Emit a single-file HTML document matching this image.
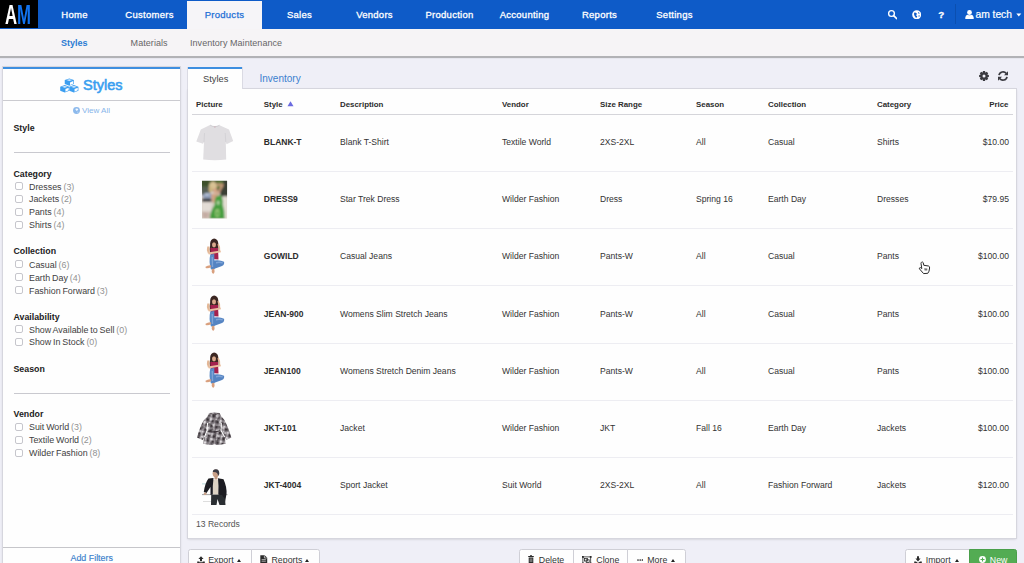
<!DOCTYPE html>
<html lang="en">
<head>
<meta charset="utf-8">
<title>Styles</title>
<style>
*{box-sizing:border-box;margin:0;padding:0}
html,body{width:1024px;height:563px;overflow:hidden}
body{background:#efeff7;font-family:"Liberation Sans",sans-serif;font-size:9px;color:#333;position:relative}
div,span,svg{position:absolute}
span{position:static}
/* top nav */
#nav{left:0;top:0;width:1024px;height:28.7px;background:#0e5bc8}
#logo{left:0;top:0;width:38px;height:28px;background:#000;overflow:hidden}
#logo b{position:absolute;top:1px;font-weight:bold;font-size:27px;line-height:28px;transform-origin:0 50%;transform:scaleX(.62)}
.ni{top:.2px;height:28px;width:75px;text-align:center;line-height:30px;font-size:9.5px;letter-spacing:.27px;color:#fff;-webkit-text-stroke:.3px #fff}
.ni.act{top:1.4px;line-height:27.6px;height:27.3px;background:#f6f5f8;color:#1d6fd6;-webkit-text-stroke:.25px #1d6fd6}
#sub{left:0;top:28.7px;width:1024px;height:29.4px;background:#f6f4f6}
.si{top:.6px;height:28px;line-height:29px;font-size:9px;color:#666;white-space:nowrap}
/* panels */
.panel{background:#fefefe;box-shadow:0 0 0 1px #d6d6de,0 1px 2.5px rgba(0,0,0,.2)}
#left{left:3px;top:67px;width:177px;height:500px;border-top:2px solid #3d8ee0}
#right{left:188px;top:88.9px;width:827.6px;height:449.1px}
/* sidebar */
.fh,.fi{left:13.5px;height:12px;line-height:12px;margin-top:-5.6px;font-size:8.9px;white-space:nowrap;color:#222}
.fh{font-weight:bold;font-size:8.8px}
.fi{left:29px;color:#414141;word-spacing:-.6px}
.fi span{color:#929292}
.cb{margin-top:0;left:14.9px;width:8.4px;height:8.2px;border:1px solid #c6c6cc;border-radius:2px;background:#fff}
.hr{left:13.5px;width:156px;height:1px;background:#c9c9cf}
/* table */
.th{top:98.5px;height:12px;line-height:12px;font-weight:bold;font-size:7.9px;color:#2c2c2c;white-space:nowrap}
.td{height:12px;line-height:12px;margin-top:-6px;font-size:8.58px;color:#333;white-space:nowrap}
.td.b{font-weight:bold;font-size:8.5px;color:#2c2c2c}
.hl{left:192px;width:820.5px;height:1px;background:#ededf2}
/* buttons */
.bt{top:553.8px;height:12px;line-height:12px;font-size:8.8px;color:#333;white-space:nowrap}
.ct{top:558.5px;width:0;height:0;border-left:2.5px solid transparent;border-right:2.5px solid transparent;border-bottom:3px solid #222}
.btn{top:548.5px;height:20px;background:#fefefe;border:1px solid #cfcfd6}
</style>
</head>
<body>
<div id="nav">
  <div id="logo"><b style="left:5px;color:#fff">A</b><b style="left:17px;color:#1173f0">M</b></div>
  <div class="ni" style="left:37px">Home</div>
  <div class="ni" style="left:112px">Customers</div>
  <div class="ni act" style="left:187px">Products</div>
  <div class="ni" style="left:262px">Sales</div>
  <div class="ni" style="left:337px">Vendors</div>
  <div class="ni" style="left:412px">Production</div>
  <div class="ni" style="left:487px">Accounting</div>
  <div class="ni" style="left:562px">Reports</div>
  <div class="ni" style="left:637px">Settings</div>
  <div class="ni" style="left:975.6px;top:-.4px;width:40px;text-align:left;font-size:10.3px;letter-spacing:-.05px;-webkit-text-stroke:.2px #fff">am tech</div>
  <div style="left:955px;top:4px;width:1px;height:20px;background:#0b4fb0"></div>
</div>
<div id="sub">
  <div class="si" style="left:61px;color:#2b7bd3;font-weight:bold">Styles</div>
  <div class="si" style="left:130.6px;letter-spacing:.06px">Materials</div>
  <div class="si" style="left:190px;letter-spacing:.05px">Inventory Maintenance</div>
</div>
<div style="left:0;top:56.3px;width:1024px;height:1.8px;background:#b2b2b6"></div>
<div style="left:0;top:58.1px;width:1024px;height:1px;background:#e6e6ee"></div>
<div id="left" class="panel"></div>
<div id="right" class="panel"></div>
<!-- sidebar title -->
<div style="left:83px;top:75px;height:20px;line-height:20px;font-size:14.5px;color:#3a9ff0;-webkit-text-stroke:.6px #3a9ff0">Styles</div>
<div style="left:3px;top:100px;width:177px;height:1px;background:#cbcbd0"></div>
<div style="left:82px;top:105px;height:12px;line-height:12px;font-size:8.05px;color:#86b5ea">View All</div>
<div style="left:3px;top:546.8px;width:177px;height:1px;background:#c6c6ca"></div>
<div style="left:70.5px;top:551.5px;height:12px;line-height:12px;font-size:8.9px;color:#3a80cc;-webkit-text-stroke:.15px #3a80cc">Add Filters</div>
<!-- tabs -->
<div style="left:188px;top:67px;width:54.3px;height:22px;background:#fefefe;border-top:2px solid #3d8ee0;box-shadow:-1px 0 0 #dadae3,1px 0 0 #dadae3"></div>
<div style="left:203px;top:72.8px;height:12px;line-height:12px;font-size:9.3px;color:#444">Styles</div>
<div style="left:259.5px;top:72.5px;height:12px;line-height:12px;font-size:10px;color:#3b7fcf">Inventory</div>
<div class="td" style="left:196px;top:524px;color:#555">13 Records</div>
<div class="fh" style="top:128px">Style</div>
<div class="hr" style="top:152px"></div>
<div class="fh" style="top:173.4px">Category</div>
<div class="cb" style="top:182.2px"></div><div class="fi" style="top:186.2px">Dresses <span>(3)</span></div>
<div class="cb" style="top:195px"></div><div class="fi" style="top:199px">Jackets <span>(2)</span></div>
<div class="cb" style="top:207.8px"></div><div class="fi" style="top:211.8px">Pants <span>(4)</span></div>
<div class="cb" style="top:220.6px"></div><div class="fi" style="top:224.6px">Shirts <span>(4)</span></div>
<div class="fh" style="top:251px">Collection</div>
<div class="cb" style="top:260.2px"></div><div class="fi" style="top:264.2px">Casual <span>(6)</span></div>
<div class="cb" style="top:273.2px"></div><div class="fi" style="top:277.2px">Earth Day <span>(4)</span></div>
<div class="cb" style="top:286.2px"></div><div class="fi" style="top:290.2px">Fashion Forward <span>(3)</span></div>
<div class="fh" style="top:316.2px">Availability</div>
<div class="cb" style="top:325.2px"></div><div class="fi" style="top:329.2px">Show Available to Sell <span>(0)</span></div>
<div class="cb" style="top:338px"></div><div class="fi" style="top:342px">Show In Stock <span>(0)</span></div>
<div class="fh" style="top:368.5px">Season</div>
<div class="hr" style="top:392.5px"></div>
<div class="fh" style="top:413.7px">Vendor</div>
<div class="cb" style="top:422.8px"></div><div class="fi" style="top:426.8px">Suit World <span>(3)</span></div>
<div class="cb" style="top:435.6px"></div><div class="fi" style="top:439.6px">Textile World <span>(2)</span></div>
<div class="cb" style="top:448.5px"></div><div class="fi" style="top:452.5px">Wilder Fashion <span>(8)</span></div><div class="th" style="left:196px">Picture</div>
<div class="th" style="left:263.8px">Style</div>
<div class="th" style="left:340px">Description</div>
<div class="th" style="left:502px">Vendor</div>
<div class="th" style="left:600px">Size Range</div>
<div class="th" style="left:696px">Season</div>
<div class="th" style="left:768px">Collection</div>
<div class="th" style="left:877px">Category</div>
<div class="th" style="left:958px;width:50.5px;text-align:right">Price</div>
<div class="hl" style="top:113.5px;height:1.5px;background:#d5d5da"></div>
<div class="td b" style="left:263.8px;top:142.0px">BLANK-T</div>
<div class="td" style="left:340px;top:142.0px">Blank T-Shirt</div>
<div class="td" style="left:502px;top:142.0px">Textile World</div>
<div class="td" style="left:600px;top:142.0px">2XS-2XL</div>
<div class="td" style="left:696px;top:142.0px">All</div>
<div class="td" style="left:768px;top:142.0px">Casual</div>
<div class="td" style="left:877px;top:142.0px">Shirts</div>
<div class="td" style="left:948px;width:61px;text-align:right;top:142.0px">$10.00</div>
<div class="hl" style="top:171.0px"></div>
<div class="td b" style="left:263.8px;top:199.2px">DRESS9</div>
<div class="td" style="left:340px;top:199.2px">Star Trek Dress</div>
<div class="td" style="left:502px;top:199.2px">Wilder Fashion</div>
<div class="td" style="left:600px;top:199.2px">Dress</div>
<div class="td" style="left:696px;top:199.2px">Spring 16</div>
<div class="td" style="left:768px;top:199.2px">Earth Day</div>
<div class="td" style="left:877px;top:199.2px">Dresses</div>
<div class="td" style="left:948px;width:61px;text-align:right;top:199.2px">$79.95</div>
<div class="hl" style="top:228.2px"></div>
<div class="td b" style="left:263.8px;top:256.4px">GOWILD</div>
<div class="td" style="left:340px;top:256.4px">Casual Jeans</div>
<div class="td" style="left:502px;top:256.4px">Wilder Fashion</div>
<div class="td" style="left:600px;top:256.4px">Pants-W</div>
<div class="td" style="left:696px;top:256.4px">All</div>
<div class="td" style="left:768px;top:256.4px">Casual</div>
<div class="td" style="left:877px;top:256.4px">Pants</div>
<div class="td" style="left:948px;width:61px;text-align:right;top:256.4px">$100.00</div>
<div class="hl" style="top:285.4px"></div>
<div class="td b" style="left:263.8px;top:313.6px">JEAN-900</div>
<div class="td" style="left:340px;top:313.6px">Womens Slim Stretch Jeans</div>
<div class="td" style="left:502px;top:313.6px">Wilder Fashion</div>
<div class="td" style="left:600px;top:313.6px">Pants-W</div>
<div class="td" style="left:696px;top:313.6px">All</div>
<div class="td" style="left:768px;top:313.6px">Casual</div>
<div class="td" style="left:877px;top:313.6px">Pants</div>
<div class="td" style="left:948px;width:61px;text-align:right;top:313.6px">$100.00</div>
<div class="hl" style="top:342.6px"></div>
<div class="td b" style="left:263.8px;top:370.8px">JEAN100</div>
<div class="td" style="left:340px;top:370.8px">Womens Stretch Denim Jeans</div>
<div class="td" style="left:502px;top:370.8px">Wilder Fashion</div>
<div class="td" style="left:600px;top:370.8px">Pants-W</div>
<div class="td" style="left:696px;top:370.8px">All</div>
<div class="td" style="left:768px;top:370.8px">Casual</div>
<div class="td" style="left:877px;top:370.8px">Pants</div>
<div class="td" style="left:948px;width:61px;text-align:right;top:370.8px">$100.00</div>
<div class="hl" style="top:399.8px"></div>
<div class="td b" style="left:263.8px;top:428.0px">JKT-101</div>
<div class="td" style="left:340px;top:428.0px">Jacket</div>
<div class="td" style="left:502px;top:428.0px">Wilder Fashion</div>
<div class="td" style="left:600px;top:428.0px">JKT</div>
<div class="td" style="left:696px;top:428.0px">Fall 16</div>
<div class="td" style="left:768px;top:428.0px">Earth Day</div>
<div class="td" style="left:877px;top:428.0px">Jackets</div>
<div class="td" style="left:948px;width:61px;text-align:right;top:428.0px">$100.00</div>
<div class="hl" style="top:457.0px"></div>
<div class="td b" style="left:263.8px;top:485.2px">JKT-4004</div>
<div class="td" style="left:340px;top:485.2px">Sport Jacket</div>
<div class="td" style="left:502px;top:485.2px">Suit World</div>
<div class="td" style="left:600px;top:485.2px">2XS-2XL</div>
<div class="td" style="left:696px;top:485.2px">All</div>
<div class="td" style="left:768px;top:485.2px">Fashion Forward</div>
<div class="td" style="left:877px;top:485.2px">Jackets</div>
<div class="td" style="left:948px;width:61px;text-align:right;top:485.2px">$120.00</div>
<div class="hl" style="top:514.2px"></div><!-- bottom buttons -->
<div class="btn" style="left:188px;width:64px;border-radius:2.5px 0 0 0"></div>
<div class="btn" style="left:251px;width:68.5px;border-radius:0 2.5px 0 0"></div>
<div class="btn" style="left:519px;width:55px;border-radius:2.5px 0 0 0"></div>
<div class="btn" style="left:573px;width:55px"></div>
<div class="btn" style="left:627px;width:58.5px;border-radius:0 2.5px 0 0"></div>
<div class="btn" style="left:905px;width:65px;border-radius:2.5px 0 0 0"></div>
<div class="btn" style="left:969px;width:48px;border-radius:0 2.5px 0 0;background:#53ac53;border-color:#4a9f4a"></div>
<div class="bt" style="left:208.2px">Export</div>
<div class="bt" style="left:271.5px">Reports</div>
<div class="bt" style="left:538.8px">Delete</div>
<div class="bt" style="left:596.3px">Clone</div>
<div class="bt" style="left:647.3px">More</div>
<div class="bt" style="left:925.7px">Import</div>
<div class="bt" style="left:989.8px;color:#fff">New</div>
<div class="ct" style="left:237px"></div>
<div class="ct" style="left:305px"></div>
<div class="ct" style="left:670.5px"></div>
<div class="ct" style="left:955.2px"></div>
<svg width="0" height="0" style="left:0;top:0"><defs>
<filter id="b0" x="-20%" y="-20%" width="140%" height="140%"><feGaussianBlur stdDeviation="0.35"/></filter>
<filter id="b15" x="-20%" y="-20%" width="140%" height="140%"><feGaussianBlur stdDeviation="0.7"/></filter>
<filter id="b1" x="-20%" y="-20%" width="140%" height="140%"><feGaussianBlur stdDeviation="0.55"/></filter>
<filter id="b2" x="-20%" y="-20%" width="140%" height="140%"><feGaussianBlur stdDeviation="0.85"/></filter>
<filter id="b3" x="-20%" y="-20%" width="140%" height="140%"><feGaussianBlur stdDeviation="1.2"/></filter>
<g id="woman" filter="url(#b15)">
 <ellipse cx="24.2" cy="12" rx="4.1" ry="5.6" fill="#3b2622"/>
 <path d="M20.5 12 q-1.5 5 -0.5 9 l2.5 0 z M27.5 11 q1.8 4 0.8 9 l-2 -1 z" fill="#3b2622"/>
 <ellipse cx="24" cy="12.8" rx="2" ry="2.6" fill="#d9a98c"/>
 <path d="M20.3 16 L28 16 L28.5 27.5 L21 27 z" fill="#a4214d"/>
 <path d="M17.3 14.5 q-1.2 3.5 0.6 7 l2 -.6 q-1 -3.5 -.3 -6.300z" fill="#e3b796"/>
 <path d="M18 20.5 L30.5 18.4 L31 20.2 L18.8 22.600z" fill="#e8bf9f"/>
 <path d="M28.6 11.5 q2.3 3.5 1.6 7.8 l-1.5 0 q.3 -3.8 -1.3 -6.800z" fill="#e3b796"/>
 <path d="M20.3 22.5 L24.3 22 L24.5 37 L21 37.5 Q18.5 30 20.3 22.500z" fill="#5a8ac6"/>
 <path d="M24 28.5 Q30 27.5 34 29.8 Q34.8 32.5 32 34 L22.5 37.5 L21.5 35 z" fill="#5584c2"/>
 <path d="M21.6 25 L23 25 L23.2 35 L22 35z M26 30 Q30 29 33 30.5 L32.500 31.5 Q29 30.5 26 31.500z" fill="#7fa4d6"/>
 <path d="M15.5 34.8 q2.5 -2 5.5 -1.6 l.2 1.7 q-3 1.8 -5.5 1z" fill="#d9a07e"/>
 <path d="M22 37 l2.3 -.3 q.8 3 -.6 5 q-1.8 -.2 -2 -2z" fill="#d9a07e"/>
</g>
</defs></svg>
<!-- T-shirt -->
<svg style="left:190px;top:120px" width="60" height="50" viewBox="0 0 60 50">
 <g filter="url(#b1)">
 <path d="M20 5 Q24.5 6.8 29.5 5.2 L39 9.5 L43.2 21 L36.5 24.2 L35.8 22 L36.2 39.5 Q25 41 13.2 39.5 L14 22 L13 23.8 L6.3 21.5 L10.8 9.5 z" fill="#e0dee1"/>
 <path d="M20 5 Q24.5 8.5 29.5 5.2" fill="none" stroke="#c9c7cb" stroke-width=".7"/>
 <path d="M14 22 L14.5 13 M35.8 22 L35.2 13" stroke="#cfcdd1" stroke-width=".7" fill="none"/>
 <rect x="24.4" y="6.4" width="1" height="1.1" fill="#c9a0aa"/>
 </g>
</svg>
<!-- Dress photo -->
<svg style="left:190px;top:175px" width="60" height="50" viewBox="0 0 60 50">
 <clipPath id="dc"><rect x="12" y="5.8" width="25.1" height="37.7"/></clipPath>
 <g clip-path="url(#dc)"><g filter="url(#b2)">
  <rect x="10" y="4" width="30" height="42" fill="#d9d0c7"/>
  <rect x="10" y="3" width="30" height="13" fill="#4a5d31"/>
  <rect x="11" y="3" width="8" height="8" fill="#3d4f2a"/>
  <rect x="30" y="5" width="9" height="16.5" fill="#3b4036"/>
  <rect x="27" y="6" width="6" height="7" fill="#5e7a3a"/>
  <rect x="11" y="12" width="9" height="8" fill="#565f52"/>
  <ellipse cx="17.5" cy="20.8" rx="5" ry="3" fill="#8e9db9"/>
  <ellipse cx="17" cy="19.6" rx="2.5" ry="1" fill="#c5cedd"/>
  <rect x="12" y="23.6" width="9.5" height="3.2" fill="#2d2e33"/>
  <rect x="12" y="27.4" width="9" height="9.6" fill="#e3dcd5"/>
  <rect x="12" y="36.5" width="8" height="7" fill="#cdb9b0"/>
  <path d="M12.5 38 L18 40 M13 41 L17 42.5" stroke="#a98478" stroke-width=".7"/>
  <rect x="33" y="21.5" width="5" height="23" fill="#e4ded4"/>
  <ellipse cx="23" cy="11" rx="4" ry="4.4" fill="#d9c394"/>
  <ellipse cx="20.5" cy="14.5" rx="1.8" ry="3" fill="#cdb47f"/>
  <ellipse cx="25.2" cy="15.6" rx="2" ry="2.8" fill="#d6a585"/>
  <path d="M27.6 19 L32.6 9.8 L27 9.6" fill="none" stroke="#c8997a" stroke-width="2.3" stroke-linejoin="round" stroke-linecap="round"/>
  <path d="M21 19.5 Q24 18 27.5 20 L27 27 L22.5 28z" fill="#d2a283"/>
  <path d="M26 21.5 L30.5 20 Q33.5 24 32.6 29 Q35 36 34.6 44 L19.8 44 Q20.2 36 24.6 30 Q24.2 25 26 21.5z" fill="#449d3c"/>
  <ellipse cx="27.3" cy="38" rx="2.4" ry="4.2" fill="#93c273"/>
  <ellipse cx="27.4" cy="38.4" rx="1" ry="2" fill="#4aa542"/>
  <ellipse cx="28.2" cy="27.8" rx="1.4" ry="2.2" fill="#b3d4a3"/>
 </g></g>
</svg>
<!-- women in jeans x3 -->
<svg style="left:190px;top:232px" width="60" height="50" viewBox="0 0 60 50"><use href="#woman"/></svg>
<svg style="left:190px;top:289.200px" width="60" height="50" viewBox="0 0 60 50"><use href="#woman"/></svg>
<svg style="left:190px;top:346.400px" width="60" height="50" viewBox="0 0 60 50"><use href="#woman"/></svg>
<!-- plaid jacket -->
<svg style="left:190px;top:404px" width="60" height="50" viewBox="0 0 60 50">
 <defs>
  <pattern id="pl" width="5" height="5" patternUnits="userSpaceOnUse" patternTransform="rotate(14)">
   <rect width="5" height="5" fill="#857f84"/>
   <rect width="2.4" height="2.4" fill="#3f383d"/>
   <rect x="2.8" y="2.8" width="1.9" height="1.9" fill="#dedadd"/>
   <rect x="2.8" y="0" width="1.4" height="1.6" fill="#b9b4b8"/>
  </pattern>
  <pattern id="pl2" width="7.3" height="6.1" patternUnits="userSpaceOnUse" patternTransform="rotate(-24)">
   <rect x="1" y="1" width="3" height="2.2" fill="#2f292e" opacity=".55"/>
   <rect x="4.6" y="3.6" width="2.2" height="2" fill="#f4f1f3" opacity=".6"/>
  </pattern>
  <clipPath id="jc"><path d="M19 9 Q24.5 7.8 29.5 9 L31.5 12.5 L34.8 16.5 Q39 25 41.4 33.6 L36.4 36 L35 33.5 L35.6 39.8 Q25 42.2 13.2 39.8 L14 33.5 L12.6 36 L7 33.6 Q9.8 23 13.6 16.5 L17.4 12.5z"/></clipPath>
 </defs>
 <g filter="url(#b1)"><g clip-path="url(#jc)" filter="url(#b0)"><rect width="60" height="50" fill="url(#pl)"/><rect width="60" height="50" fill="url(#pl2)"/>
  <path d="M25 9 L25.6 40" stroke="#554e54" stroke-width=".6"/>
  <path d="M17.6 27 Q24 29 30.8 26.5" stroke="#3d363b" stroke-width="1.2" fill="none"/>
  <path d="M14.6 33 Q16.4 28 17.2 26.5 Q17 22 17.6 19 M34.6 33 Q32 28 31 26.5 Q31.6 22 31.2 19" stroke="#fff" stroke-width="1.1" fill="none"/>
  <path d="M20.5 9.5 Q24.5 12 28.5 9.5" stroke="#4a4348" stroke-width="1" fill="none"/>
 </g></g>
</svg>
<!-- man in black jacket -->
<svg style="left:190px;top:461px" width="60" height="50" viewBox="0 0 60 50">
 <g filter="url(#b1)">
  <rect x="12" y="33.2" width="25.5" height=".9" fill="#9a9a9a"/>
  <rect x="13" y="40" width="8" height=".6" fill="#c8c8c8"/>
  <rect x="12" y="22.5" width="4" height=".8" fill="#a9d3d8"/>
  <ellipse cx="25.8" cy="12.3" rx="3.2" ry="3.9" fill="#c9a088"/>
  <path d="M22.8 11 Q23 8 26 8.3 Q29.5 8.3 29.3 13 L28 15 Q28 10.5 22.8 11z" fill="#3b3a44"/>
  <rect x="24.5" y="15" width="3" height="3.5" fill="#c39a82"/>
  <path d="M23 19 L28.5 19 L28.5 33.5 L22.5 33.500z" fill="#ddd3c4"/>
  <path d="M18.5 17.5 L23.5 17 Q22.5 25 22.8 33.5 L20.5 34 L20.5 26 L16.5 32 L13.8 31 Q15 22 18.5 17.500z" fill="#1b1b20"/>
  <path d="M28 17.2 L33.5 18.2 Q37 26 36.5 33 L35 41 L32 35 L28.3 33.5 Q28.8 25 28 17.200z" fill="#1b1b20"/>
  <ellipse cx="15.2" cy="32.8" rx="1.5" ry="1.3" fill="#c9a088"/>
  <path d="M21.2 33.8 L32 33.8 L35 38 L35.5 44 L29.5 44 L27.5 38 L26.5 44 L21 44z" fill="#2a2d30"/>
 </g>
</svg>
<svg style="left:977.8px;top:70px" width="12" height="12" viewBox="0 0 12 12"><path d="M4.77 2.3 L4.91 1.12 L7.09 1.12 L7.23 2.3 L7.75 2.51 L8.68 1.78 L10.22 3.32 L9.49 4.25 L9.7 4.77 L10.88 4.91 L10.88 7.09 L9.7 7.23 L9.49 7.75 L10.22 8.68 L8.68 10.22 L7.75 9.49 L7.23 9.7 L7.09 10.88 L4.91 10.88 L4.77 9.7 L4.25 9.49 L3.32 10.22 L1.78 8.68 L2.51 7.75 L2.3 7.23 L1.12 7.09 L1.12 4.91 L2.3 4.77 L2.51 4.25 L1.78 3.32 L3.32 1.78 L4.25 2.51z M4.5 6 a1.5 1.5 0 1 0 3 0 a1.5 1.5 0 1 0 -3 0z" fill="#3a3a40" fill-rule="evenodd"/></svg>
<svg style="left:997.4px;top:70px" width="12" height="12" viewBox="0 0 12 12"><g fill="none" stroke="#3a3a40" stroke-width="1.7"><path d="M2 5.2 A4.1 4.1 0 0 1 9.3 3.5"/><path d="M10 6.8 A4.1 4.1 0 0 1 2.7 8.5"/></g><path d="M11 1.2 L11 5.2 L7 5.2z M1 10.8 L1 6.8 L5 6.8z" fill="#3a3a40"/></svg>
<svg style="left:286.5px;top:100.5px" width="7" height="6" viewBox="0 0 7 6"><path d="M3.5 .3 L6.5 5.2 L.5 5.2z" fill="#6b6be0"/></svg>
<svg style="left:59.7px;top:77.6px" width="19" height="15" viewBox="0 0 19 15"><path d="M9.3 0.4 L13.85 2.1 L13.85 6 L9.3 7.7 L4.75 6 L4.75 2.1z" fill="#3b9ef0"/><path d="M10 4.4 L13.2 2.95 L13.2 5.65 L10 6.95z" fill="#fdfdfe"/><path d="M9.3 1.2 L12.25 2.1 L9.3 3 L6.35 2.1z" fill="#d8ebfc"/><path d="M4.75 7.1 L9.3 8.8 L9.3 12.7 L4.75 14.4 L0.2 12.7 L0.2 8.8z" fill="#3b9ef0"/><path d="M5.45 11.1 L8.65 9.65 L8.65 12.35 L5.45 13.65z" fill="#fdfdfe"/><path d="M4.75 7.9 L7.7 8.8 L4.75 9.7 L1.8 8.8z" fill="#d8ebfc"/><path d="M13.85 7.1 L18.4 8.8 L18.4 12.7 L13.85 14.4 L9.3 12.7 L9.3 8.8z" fill="#3b9ef0"/><path d="M14.55 11.1 L17.75 9.65 L17.75 12.35 L14.55 13.65z" fill="#fdfdfe"/><path d="M13.85 7.9 L16.8 8.8 L13.85 9.7 L10.9 8.8z" fill="#d8ebfc"/></svg>
<svg style="left:72.7px;top:106.9px" width="7" height="7" viewBox="0 0 10 10"><circle cx="5" cy="5" r="4.9" fill="#8cb9ec"/><path d="M3.6 2.6 Q5.5 1.6 7.6 2.8 Q7.2 4.4 5.8 5.2 Q5 6.4 4.6 4.8 Q3.2 4.2 3.6 2.6z" fill="#f4f9fe"/><path d="M6.4 6.8 Q7.6 6.4 8 7.2 Q7.2 8.4 6.2 8.2z" fill="#d5e6f8"/></svg>
<svg style="left:886.7px;top:9.2px" width="10.8" height="10.8" viewBox="0 0 12 12"><circle cx="5" cy="5" r="3.2" fill="none" stroke="#fff" stroke-width="1.5"/><path d="M7.4 7.4 L10.6 10.6" stroke="#fff" stroke-width="1.8" stroke-linecap="round"/></svg>
<svg style="left:911.8px;top:9.6px" width="9.4" height="9.4" viewBox="0 0 10 10"><circle cx="5" cy="5" r="4.8" fill="#fff"/><path d="M2.2 3 Q3.6 2.4 4.4 3.2 Q5.4 3.4 5.2 4.4 Q4.2 4.8 4.4 5.8 Q5.6 6 5.6 7 Q5 8.4 4.2 8.6 Q3.8 7.4 3 6.6 Q2 5.6 2.2 3z M6.4 2 Q7.6 2.4 8.2 3.6 L7.2 4 Q6.4 3.2 6.4 2z M7 5.6 Q8 5.4 8.4 6 Q8 7 7.2 7.4z" fill="#0e5bc8"/></svg>
<div style="left:937.2px;top:8.4px;width:8px;height:14px;line-height:14px;text-align:center;font-size:9.8px;-webkit-text-stroke:.3px #fff;font-weight:bold;color:#fff">?</div>
<svg style="left:964.5px;top:9.5px" width="9" height="9.5" viewBox="0 0 9 9.5"><circle cx="4.5" cy="2.5" r="2.4" fill="#fff"/><path d="M.3 9.3 L.3 7.4 Q.5 5 2.8 4.7 Q4.5 5.8 6.2 4.7 Q8.5 5 8.7 7.4 L8.7 9.3z" fill="#fff"/></svg>
<svg style="left:1016px;top:12.9px" width="6" height="4" viewBox="0 0 6 4"><path d="M.3 .4 L5.3 .4 L2.8 3.4z" fill="#fff"/></svg>
<svg style="left:196.6px;top:555.5px" width="8" height="8" viewBox="0 0 8 8"><path d="M4 .2 L6.6 3 L5 3 L5 5.2 L3 5.2 L3 3 L1.4 3z M.2 5.6 L2.4 5.6 L2.4 6.2 L5.6 6.2 L5.6 5.6 L7.8 5.6 L7.8 8 L.2 8z" fill="#2b2b2b"/></svg>
<svg style="left:260.2px;top:555.2px" width="7.5" height="8" viewBox="0 0 7.5 8"><path d="M.3 .2 L4.6 .2 L7.2 2.8 L7.2 8 L.3 8z" fill="#2b2b2b"/><path d="M4.4 .6 L4.4 3 L6.8 3" fill="none" stroke="#fff" stroke-width=".6"/><path d="M1.6 4.6 H5.8 M1.6 6.2 H5.8" stroke="#fff" stroke-width=".6"/></svg>
<svg style="left:528.4px;top:555.4px" width="6" height="8" viewBox="0 0 6 8"><path d="M2 .2 H4 V1 H5.8 V2 H.2 V1 H2z M.7 2.5 H5.3 V8 H.7z" fill="#2b2b2b"/><path d="M2.2 3.4 V7 M3.8 3.4 V7" stroke="#fff" stroke-width=".5"/></svg>
<svg style="left:582.2px;top:555.6px" width="9.6" height="8" viewBox="0 0 9.6 8"><g fill="none" stroke="#2b2b2b" stroke-width=".8"><rect x=".9" y=".9" width="7.8" height="6.6"/><rect x="2.6" y="2.4" width="3" height="2.6"/><rect x="4.2" y="3.8" width="3" height="2.6"/></g><g fill="#2b2b2b"><rect x="0" y="0" width="1.8" height="1.8"/><rect x="7.8" y="0" width="1.8" height="1.8"/><rect x="0" y="6.6" width="1.8" height="1.4"/><rect x="7.8" y="6.6" width="1.8" height="1.4"/></g></svg>
<svg style="left:636.6px;top:558.8px" width="6.4" height="2" viewBox="0 0 6.4 2"><circle cx="1" cy="1" r=".85" fill="#2b2b2b"/><circle cx="3.2" cy="1" r=".85" fill="#2b2b2b"/><circle cx="5.4" cy="1" r=".85" fill="#2b2b2b"/></svg>
<svg style="left:914.2px;top:555.5px" width="8" height="8" viewBox="0 0 8 8"><path d="M3 .2 L5 .2 L5 2.6 L6.6 2.6 L4 5.4 L1.4 2.6 L3 2.6z M.2 5.6 L2 5.6 L4 7 L6 5.6 L7.8 5.6 L7.8 8 L.2 8z" fill="#2b2b2b"/></svg>
<svg style="left:978.6px;top:556.2px" width="7" height="7" viewBox="0 0 7 7"><circle cx="3.5" cy="3.5" r="3.4" fill="#fff"/><path d="M3.5 1.5 V5.5 M1.5 3.5 H5.5" stroke="#53ac53" stroke-width="1.1"/></svg>
<svg style="left:918px;top:260.6px" width="13" height="14" viewBox="0 0 13 14"><path d="M3.6 1.2 Q4.6 .6 5.2 1.6 L5.8 4.3 L10.5 5 Q11.8 5.4 11.6 7 L11 10.2 L9.8 12.3 L5.6 12.6 L1.4 7.8 Q1.2 6.6 2.4 6.6 L3.8 7.6 L3 2.4 Q3 1.6 3.6 1.2z" fill="#fff" stroke="#2a2a2a" stroke-width="1" stroke-linejoin="round"/><path d="M6.2 7.2 L9.4 7.4 L9.2 9.4 L6.6 9.4z" fill="#777"/></svg>
</body></html>
